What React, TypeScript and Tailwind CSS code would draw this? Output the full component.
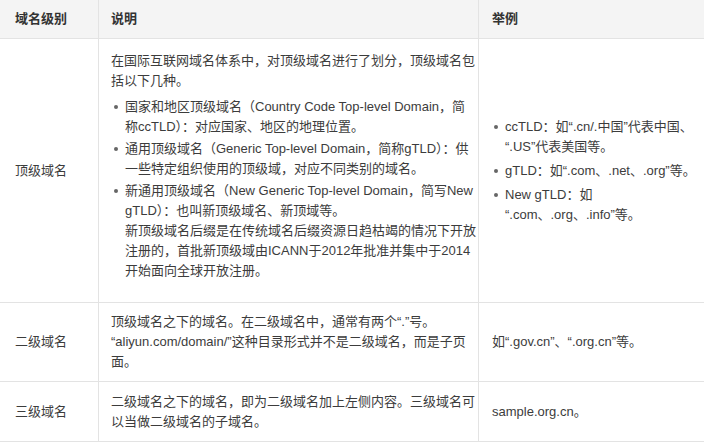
import * as React from 'react';

const font = { fontFamily: '"Liberation Sans", "Noto Sans CJK SC", sans-serif' };

function Dot() {
    return <span className="mt-[8px] mr-[7px] h-[4px] w-[4px] shrink-0 rounded-full bg-[#666]" />;
}

function Item({ children, className }: { children: React.ReactNode; className?: string }) {
    return (
        <li className={`flex items-start ${className ?? ''}`}>
            <Dot />
            <span>{children}</span>
        </li>
    );
}

function Row({ level, desc, example, height }: { level: string; desc: React.ReactNode; example: React.ReactNode; height: string }) {
    return (
        <div className={`grid grid-cols-[98px_380px_226px] border-b border-[#e3e3e3] ${height}`}>
            <div className="flex items-center pl-[15px]">{level}</div>
            <div className="flex flex-col justify-center border-l border-[#e3e3e3] px-[12px]">{desc}</div>
            <div className="flex flex-col justify-center border-l border-[#e3e3e3] pl-[13px]">{example}</div>
        </div>
    );
}

export default function App() {
    return (
        <div className="h-[446px] w-[706px] bg-white text-[13px] leading-[20px] text-[#3c3c3c]" style={font}>
            <div className="w-[704px]">
                <div className="grid h-[39px] grid-cols-[98px_380px_226px] border-b border-[#e3e3e3] bg-[#f4f4f4] font-semibold text-[#333]">
                    <div className="flex items-center pl-[15px]">域名级别</div>
                    <div className="flex items-center border-l border-[#e3e3e3] pl-[12px]">说明</div>
                    <div className="flex items-center border-l border-[#e3e3e3] pl-[13px]">举例</div>
                </div>

                <div className="grid h-[264px] grid-cols-[98px_380px_226px] border-b border-[#e3e3e3]">
                    <div className="flex items-center pl-[15px]">顶级域名</div>
                    <div className="border-l border-[#e3e3e3] px-[12px] pt-[12px] whitespace-nowrap">
                        <p className="mb-[6px]">
                            在国际互联网域名体系中，对顶级域名进行了划分，顶级域名包<br />括以下几种。
                        </p>
                        <ul className="flex flex-col gap-[2px] pl-[3px]">
                            <Item>
                                国家和地区顶级域名（Country Code Top-level Domain，简<br />称ccTLD）：对应国家、地区的地理位置。
                            </Item>
                            <Item>
                                通用顶级域名（Generic Top-level Domain，简称gTLD）：供<br />一些特定组织使用的顶级域，对应不同类别的域名。
                            </Item>
                            <Item>
                                新通用顶级域名（New Generic Top-level Domain，简写New<br />gTLD）：也叫新顶级域名、新顶域等。<br />
                                新顶级域名后缀是在传统域名后缀资源日趋枯竭的情况下开放<br />注册的，首批新顶级域由ICANN于2012年批准并集中于2014<br />开始面向全球开放注册。
                            </Item>
                        </ul>
                    </div>
                    <div className="flex flex-col justify-center border-l border-[#e3e3e3] pl-[15px] whitespace-nowrap">
                        <ul className="flex flex-col gap-[4px]">
                            <Item>ccTLD：如“.cn/.中国”代表中国、<br />“.US”代表美国等。</Item>
                            <Item>gTLD：如“.com、.net、.org”等。</Item>
                            <Item>New gTLD：如<br />“.com、.org、.info”等。</Item>
                        </ul>
                    </div>
                </div>

                <Row
                    height="h-[79px]"
                    level="二级域名"
                    desc={
                        <p className="whitespace-nowrap">
                            顶级域名之下的域名。在二级域名中，通常有两个“.”号。<br />“aliyun.com/domain/”这种目录形式并不是二级域名，而是子页<br />面。
                        </p>
                    }
                    example={<p>如“.gov.cn”、“.org.cn”等。</p>}
                />
                <Row
                    height="h-[60px]"
                    level="三级域名"
                    desc={
                        <p className="whitespace-nowrap">
                            二级域名之下的域名，即为二级域名加上左侧内容。三级域名可<br />以当做二级域名的子域名。
                        </p>
                    }
                    example={<p>sample.org.cn。</p>}
                />
            </div>
        </div>
    );
}
